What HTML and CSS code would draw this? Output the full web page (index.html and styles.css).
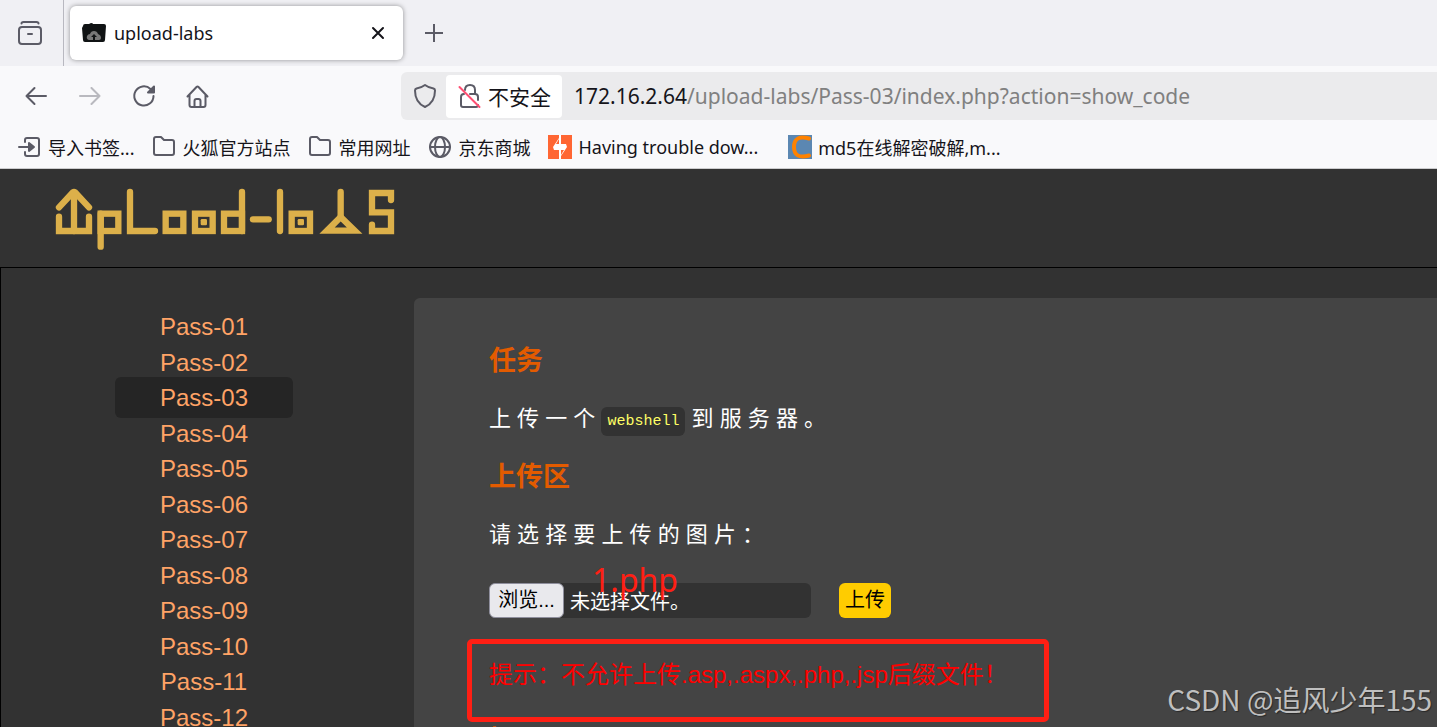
FILE: index.html
```html
<!DOCTYPE html>
<html lang="zh-CN">
<head>
    <meta charset="UTF-8">
    <meta name="viewport" content="width=device-width, initial-scale=1.0">
    <title>upload-labs</title>
    <link rel="stylesheet" href="styles.css">
</head>
<body>
    <!-- Tabs -->
    <div class="tab-bar">
        <button class="icon-button recent" aria-label="Recent">
            <svg width="26" height="26" viewBox="0 0 26 26"><path d="M4.500 3.500q0-1.500 2-1.500h13q2 0 2 1.500"/><rect x="2" y="7" width="22" height="17" rx="3"/><path d="M11 14h4"/></svg>
        </button>
        <div class="tab">
            <svg class="filled" width="24" height="20" viewBox="0 0 24 20"><path fill="#101314" d="M1 3q0-2 2-2h4l2-1q2 0 2 1h11q2 0 2 2l-1 14q0 2-2 2H3q-2 0-2-2L0 5z"/><path fill="#777" d="M7 17q-3-1-2-4 1-2 3-2 1-3 4-3t4 3q3 1 3 4 0 2-2 2z"/><path fill="#101314" d="M12 11l3 3h-2v4h-2v-4H9z"/></svg>
            <span class="tab-title">upload-labs</span>
            <button class="icon-button close" aria-label="Close">
                <svg width="14" height="14" viewBox="0 0 14 14"><path d="M2 2l10 10M12 2L2 12"/></svg>
            </button>
        </div>
        <button class="icon-button new-tab" aria-label="New tab">
            <svg width="18" height="18" viewBox="0 0 18 18"><path d="M9 0v18M0 9h18"/></svg>
        </button>
    </div>

    <!-- Address bar -->
    <div class="nav-bar">
        <div class="nav-buttons">
            <button class="icon-button" aria-label="Back">
                <svg width="24" height="24" viewBox="0 0 24 24"><path d="M22 12H2.500M10.500 4l-8 8 8 8"/></svg>
            </button>
            <button class="icon-button disabled" aria-label="Forward" disabled>
                <svg width="24" height="24" viewBox="0 0 24 24"><path d="M2 12h19.500M13.500 4l8 8-8 8"/></svg>
            </button>
            <button class="icon-button" aria-label="Reload">
                <svg width="24" height="24" viewBox="0 0 24 24"><path d="M21.500 12A9.600 9.600 0 1 1 18.500 5"/><path class="solid" d="M22 2.500v6h-6z"/></svg>
            </button>
            <button class="icon-button" aria-label="Home">
                <svg width="24" height="24" viewBox="0 0 24 24"><path d="M1.500 12.500L10.500 3q1-1 2 0L21.500 12.500M3.500 11V21q0 2 2 2h12q2 0 2-2V11M8.500 23v-6q0-2 2-2h2q2 0 2 2v6"/></svg>
            </button>
        </div>
        <div class="url-bar">
            <svg width="24" height="26" viewBox="0 0 24 26"><path d="M12 2q4 3 8.500 3.500 1.500.5 1.500 2 0 12-10 16.500Q2 19.500 2 7.500q0-1.500 1.500-2Q8 5 12 2z"/></svg>
            <button class="insecure">
                <svg width="24" height="26" viewBox="0 0 24 26"><path d="M7 7q0-5 5-5t5 5v4M6 11q-3 0-3 3v8q0 2 2 2h13q2 0 2-2M12 11h5q3 0 3 3v3"/><path class="slash" d="M1.500 4l20 20"/></svg>
                不安全
            </button>
            <div class="url"><span class="host">172.16.2.64</span>/upload-labs/Pass-03/index.php?action=show_code</div>
        </div>
    </div>

    <!-- Bookmarks -->
    <div class="bookmarks">
        <a href="#">
            <svg width="24" height="24" viewBox="0 0 24 24"><path d="M7 7V5q0-2 2-2h10q2 0 2 2v14q0 2-2 2H9q-2 0-2-2v-2M1 12h13"/><path class="solid" d="M11 8l5 4-5 4z"/></svg>
            导入书签...
        </a>
        <a href="#">
            <svg width="24" height="24" viewBox="0 0 24 24"><path d="M2 4q0-2 2-2h5l3 3h8q2 0 2 2v11q0 2-2 2H4q-2 0-2-2z"/></svg>
            火狐官方站点
        </a>
        <a href="#">
            <svg width="24" height="24" viewBox="0 0 24 24"><path d="M2 4q0-2 2-2h5l3 3h8q2 0 2 2v11q0 2-2 2H4q-2 0-2-2z"/></svg>
            常用网址
        </a>
        <a href="#">
            <svg width="24" height="24" viewBox="0 0 24 24"><circle cx="12" cy="12" r="10"/><ellipse cx="12" cy="12" rx="5" ry="10"/><path d="M2 12h20"/></svg>
            京东商城
        </a>
        <a href="#">
            <svg class="filled" width="24" height="24" viewBox="0 0 24 24"><path fill="#ff6633" d="M0 0h24v24H0z"/><path fill="#fff" d="M11 0h2v9h5l1 3-6 9v3h-2v-9H6l-1-3 6-9z"/><path fill="#ff6633" d="M11 4v5H8zM13 15v5l3-5z"/></svg>
            Having trouble dow...
        </a>
        <a href="#" class="md5">
            <svg class="filled" width="24" height="24" viewBox="0 0 24 24"><path fill="#5b87b2" d="M0 0h24v24H0z"/><path fill="none" stroke="#ff8200" stroke-width="4" d="M21 3.500q-15-4-15 8.500t15 8.500"/></svg>
            md5在线解密破解,m...
        </a>
    </div>

    <!-- Page -->
    <header class="site-header">
        <a href="#" class="logo" aria-label="upload-labs">
            <svg width="340" height="62" viewBox="45 54 1020 186">
                <polyline points="57,140 57,183 147,183 147,140"/>
                <polyline points="57,112 97,69 107,69 147,112"/>
                <line x1="102" y1="66" x2="102" y2="183"/>
                <rect x="182" y="131" width="53" height="52"/>
                <line x1="182" y1="131" x2="182" y2="230"/>
                <polyline points="270,66 270,183 345,183"/>
                <rect x="377" y="131" width="53" height="52"/>
                <rect x="465" y="131" width="53" height="52"/>
                <rect class="dot" x="482" y="147" width="19" height="19" rx="4"/>
                <rect x="552" y="131" width="54" height="52"/>
                <line x1="606" y1="66" x2="606" y2="183"/>
                <line x1="639" y1="148" x2="686" y2="148"/>
                <line x1="720" y1="66" x2="720" y2="183"/>
                <rect x="755" y="131" width="55" height="52"/>
                <rect class="dot" x="773" y="147" width="19" height="19" rx="4"/>
                <line x1="902" y1="66" x2="902" y2="140"/>
                <polyline points="902,141 861,182 944,182 902,141"/>
                <polyline points="1053,90 1053,69 996,69 996,127 1053,127 1053,183 996,183 996,164"/>
            </svg>
        </a>
    </header>
    <div class="page">
        <nav class="menu">
            <ul>
                <li><a href="#">Pass-01</a></li>
                <li><a href="#">Pass-02</a></li>
                <li><a href="#" class="active">Pass-03</a></li>
                <li><a href="#">Pass-04</a></li>
                <li><a href="#">Pass-05</a></li>
                <li><a href="#">Pass-06</a></li>
                <li><a href="#">Pass-07</a></li>
                <li><a href="#">Pass-08</a></li>
                <li><a href="#">Pass-09</a></li>
                <li><a href="#">Pass-10</a></li>
                <li><a href="#">Pass-11</a></li>
                <li><a href="#">Pass-12</a></li>
            </ul>
        </nav>
        <main class="content">
            <h3>任务</h3>
            <p>上 传 一 个 <code>webshell</code> 到 服 务 器 。</p>
            <h3>上传区</h3>
            <p>请 选 择 要 上 传 的 图 片 ：</p>
            <form class="upload-form">
                <input type="file" id="upload_file" class="file-input">
                <label for="upload_file" class="file-box">
                    <span class="browse">浏览...</span>
                    <span>未选择文件。</span>
                </label>
                <button type="button" class="submit">上传</button>
                <span class="note">1.php</span>
            </form>
            <div class="msg">提示：不允许上传.asp,.aspx,.php,.jsp后缀文件！</div>
            <h3>提示</h3>
        </main>
    </div>
    <div class="watermark">CSDN @追风少年155</div>
</body>
</html>
```
FILE: styles.css
```css
*,
*::before {
    box-sizing: border-box;
}
body {
    margin: 0;
    height: 100vh;
    overflow: hidden;
    position: relative;
    display: flex;
    flex-direction: column;
    background-color: #323232;
    font-family: "Noto Sans", "Noto Sans CJK SC", sans-serif;
    font-size: 18px;
    color: #15141a;
}
a {
    text-decoration: none;
    color: inherit;
}
button {
    border: none;
    padding: 0;
    font-family: inherit;
    color: inherit;
    background: none;
}
svg {
    display: block;
    flex: none;
    fill: none;
    stroke: #5b5b66;
    stroke-width: 2;
    stroke-linecap: round;
    stroke-linejoin: round;
}
.solid {
    fill: #5b5b66;
}
.filled {
    stroke: none;
}
.icon-button {
    display: flex;
    align-items: center;
    justify-content: center;
}
.disabled {
    opacity: 0.4;
}

/* Browser bars */
.tab-bar {
    flex: none;
    display: flex;
    align-items: center;
    height: 66px;
    background-color: #f0f0f4;
}
.recent {
    width: 64px;
    height: 66px;
    padding-right: 4px;
    border-right: 1px solid #b8b8c0;
}
.tab {
    display: flex;
    align-items: center;
    gap: 8px;
    width: 333px;
    height: 54px;
    margin-left: 6px;
    padding: 0 18px 0 12px;
    border-radius: 6px;
    background-color: #fff;
    box-shadow: 0 0 5px rgba(0, 0, 0, 0.4);
}
.tab-title {
    flex: 1;
}
.close svg {
    stroke: #15141a;
}
.new-tab {
    margin-left: 22px;
}
.new-tab svg {
    stroke-linecap: butt;
}
.nav-bar {
    flex: none;
    display: flex;
    align-items: center;
    height: 60px;
    background-color: #f9f9fb;
}
.nav-buttons {
    display: flex;
    gap: 30px;
    width: 401px;
    padding-left: 24px;
}
.url-bar {
    flex: 1;
    display: flex;
    align-items: center;
    height: 48px;
    padding-left: 12px;
    border-radius: 6px 0 0 6px;
    background-color: #ebebed;
    font-size: 21px;
}
.insecure {
    display: flex;
    align-items: center;
    gap: 6px;
    height: 43px;
    margin: 0 12px 0 9px;
    padding: 0 11px 0 12px;
    border-radius: 4px;
    background-color: #fff;
    font-size: 21px;
    white-space: nowrap;
}
.slash {
    stroke: #ff4f72;
}
.url {
    color: #808080;
    white-space: nowrap;
}
.host {
    color: #15141a;
}
.bookmarks {
    flex: none;
    display: flex;
    align-items: center;
    gap: 18px;
    height: 43px;
    padding-left: 18px;
    border-bottom: 1px solid #ccccce;
    background-color: #f9f9fb;
    white-space: nowrap;
}
.bookmarks a {
    display: flex;
    align-items: center;
    gap: 6px;
}
.bookmarks .md5 {
    margin-left: 12px;
}

/* Site */
.site-header {
    flex: none;
    height: 99px;
    padding: 19px 0 0 55px;
    border-bottom: 1px solid #000;
}
.logo {
    display: inline-block;
}
.logo svg {
    stroke: #dcb04a;
    stroke-width: 19;
    stroke-linejoin: miter;
}
.logo .dot {
    fill: #dcb04a;
    stroke: none;
}
.page {
    flex: 1;
    min-height: 0;
    display: flex;
    padding-top: 30px;
    border-left: 1px solid #000;
}
.menu {
    flex: none;
    width: 413px;
    padding: 11px 0 0 114px;
    font-family: "Liberation Sans", Arial, sans-serif;
    font-size: 24px;
    color: #ffa366;
}
.menu ul {
    display: grid;
    grid-auto-rows: 1fr;
    align-items: center;
    width: 178px;
    min-height: 426px;
    margin: 0;
    padding: 0;
    list-style: none;
}
.menu li {
    height: 35px;
}
.menu a {
    display: block;
    line-height: 35px;
    text-align: center;
}
.menu .active {
    margin: -3px 0;
    padding: 3px 0;
    border-radius: 6px;
    background-color: #252525;
}
.content {
    flex: 1;
    padding: 45px 0 0 75px;
    border-radius: 6px 0 0 0;
    background-color: #444;
    font-family: "Liberation Sans", "Noto Sans CJK SC", sans-serif;
    color: #fff;
}
.content h3 {
    margin: 0 0 24px;
    font-size: 27px;
    line-height: 36px;
    color: #e35b00;
}
.content p {
    margin: 0 0 24px;
    font-size: 22px;
    line-height: 32px;
}
.content code {
    padding: 6px;
    border-radius: 6px;
    background-color: #323232;
    font-family: "Liberation Mono", monospace;
    font-size: 15px;
    line-height: 16px;
    vertical-align: 1px;
    color: #ffff66;
}
.upload-form {
    position: relative;
    display: flex;
    align-items: center;
    gap: 28px;
    margin: 32px 0 41px;
    font-size: 20px;
}
.file-input {
    position: absolute;
    width: 1px;
    height: 1px;
    opacity: 0;
}
.file-box {
    display: flex;
    align-items: center;
    gap: 6px;
    width: 322px;
    height: 35px;
    border-radius: 6px;
    background-color: #323232;
}
.browse {
    width: 75px;
    border: 1px solid #8f8f9d;
    border-radius: 6px;
    background-color: #e9e9ed;
    line-height: 33px;
    text-align: center;
    color: #000;
}
.submit {
    width: 52px;
    height: 35px;
    border-radius: 6px;
    background-color: #ffcc00;
    font-size: 20px;
    line-height: 35px;
    color: #000;
}
.note {
    position: absolute;
    left: 103px;
    top: -25px;
    font-family: "Noto Sans", sans-serif;
    font-size: 32px;
    line-height: 44px;
    color: #ff1f14;
}
.msg {
    position: relative;
    margin-bottom: 32px;
    font-size: 24px;
    line-height: 32px;
    color: #ff0000;
}
/* red frame drawn round the message */
.msg::before {
    content: "";
    position: absolute;
    left: -22px;
    top: -20px;
    width: 582px;
    height: 83px;
    border: 5px solid #ff1f14;
    border-radius: 5px;
}
.watermark {
    position: absolute;
    right: 5px;
    bottom: 8px;
    font-family: "Noto Sans CJK SC", sans-serif;
    font-size: 28px;
    line-height: 40px;
    color: #bfbfbf;
    text-shadow: 1px 1px 1px rgba(0, 0, 0, 0.4);
}
```
